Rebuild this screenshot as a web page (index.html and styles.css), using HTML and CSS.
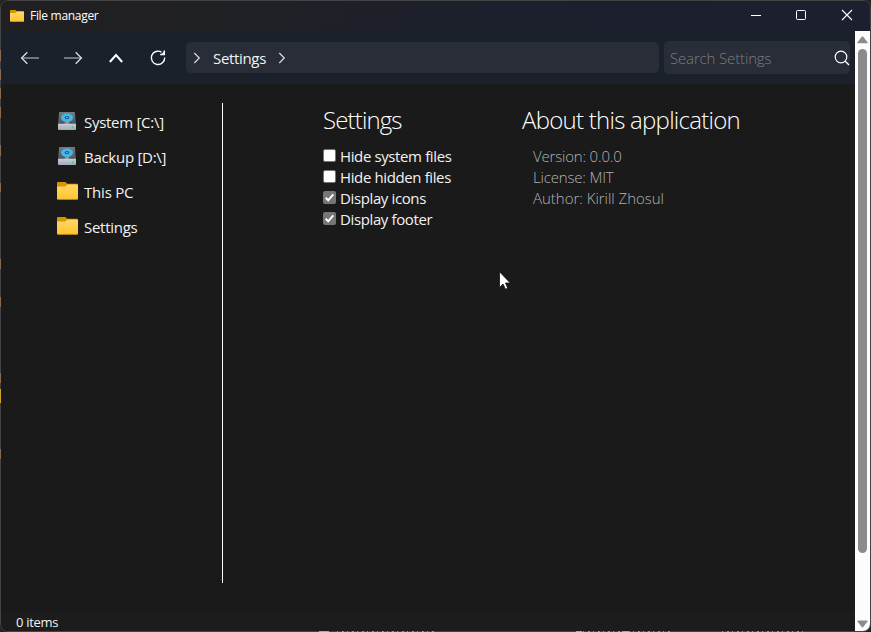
FILE: index.html
```
<!DOCTYPE html>
<html lang="en">
<head>
<meta charset="utf-8">
<title>File manager</title>
<link rel="stylesheet" href="styles.css">
</head>
<body>
<svg class="defs" width="0" height="0">
  <defs>
    <linearGradient id="gold" x1="0" y1="0" x2="0" y2="1"><stop offset="0" stop-color="#ffd667"/><stop offset="1" stop-color="#ffc52e"/></linearGradient>
    <linearGradient id="metal" x1="0" y1="0" x2="0" y2="1"><stop offset="0" stop-color="#767c82"/><stop offset="1" stop-color="#4d5359"/></linearGradient>
    <linearGradient id="tray" x1="0" y1="0" x2="0" y2="1"><stop offset="0" stop-color="#c9ccd3"/><stop offset="1" stop-color="#a2a9b7"/></linearGradient>
    <symbol id="folder" viewBox="0 0 21 18">
      <path d="M0 1.2Q0 0 1.2 0H8.4L10.2 1.7H19.8Q21 1.7 21 2.9V16H0Z" fill="#d89500"/>
      <path d="M0 4.4H8.4L10.2 2.4H20Q21 2.4 21 3.4V16.6Q21 17.6 20 17.6H1Q0 17.6 0 16.6Z" fill="url(#gold)"/>
      <path d="M.5 17.4H20.5" stroke="#c88c15" stroke-width=".8"/>
    </symbol>
    <symbol id="drive" viewBox="0 0 18 18">
      <path d="M1.2 0H16.8L18 12H0Z" fill="url(#metal)"/>
      <path d="M8 8H10L11.5 12H6.5Z" fill="#8c9299"/>
      <ellipse cx="9" cy="5.8" rx="6" ry="4.2" fill="#41b8ee"/>
      <ellipse cx="9" cy="5.6" rx="2.4" ry="1.6" fill="#235875"/>
      <ellipse cx="9" cy="5.6" rx="1" ry=".7" fill="#79cdf3"/>
      <path d="M0 11.8H18V17Q18 18 17 18H1Q0 18 0 17Z" fill="url(#tray)"/>
      <circle cx="14.7" cy="15.4" r="1.1" fill="#35dc68"/>
    </symbol>
  </defs>
</svg>
<div class="window">
  <header class="titlebar">
    <svg class="app-icon" width="14" height="12" viewBox="0 0 21 18" preserveAspectRatio="none"><use href="#folder"/></svg>
    <span class="app-title">File manager</span>
    <div class="controls">
      <svg width="46" height="30" viewBox="0 0 46 30"><path d="M19 14.5H29" stroke="#fff" fill="none"/></svg>
      <svg width="46" height="30" viewBox="0 0 46 30"><rect x="18.5" y="9.5" width="9" height="9" rx="1" stroke="#fff" fill="none"/></svg>
      <svg width="46" height="30" viewBox="0 0 46 30"><path d="M18 9L28 19M28 9L18 19" stroke="#fff" stroke-width="1.1" fill="none"/></svg>
    </div>
  </header>
  <div class="view">
    <div class="page">
      <nav class="toolbar">
        <svg class="tool" width="20" height="16" viewBox="0 0 20 16"><path d="M1.5 8H19" stroke="#8f9298" stroke-width="1.6"/><path d="M7.3 2.3L1.6 8L7.3 13.7" stroke="#ddd" stroke-width="1.3" fill="none"/></svg>
        <svg class="tool" width="20" height="16" viewBox="0 0 20 16"><path d="M1 8H18.5" stroke="#8f9298" stroke-width="1.6"/><path d="M12.7 2.3L18.4 8L12.7 13.7" stroke="#ddd" stroke-width="1.3" fill="none"/></svg>
        <svg class="tool" width="20" height="16" viewBox="0 0 20 16"><path d="M3.8 12L10 5L16.2 12" stroke="#fff" stroke-width="2" fill="none"/></svg>
        <svg class="tool" width="20" height="18" viewBox="0 0 20 18"><path d="M13.5 3.1A6.7 6.7 0 1 0 16.7 8.5" stroke="#fff" stroke-width="1.4" fill="none"/><path d="M16.3 1.4V5.4H12.2" stroke="#fff" stroke-width="1.5" fill="none"/><path d="M16.7 1.8V5.9H12.8Z" fill="#fff"/></svg>
        <div class="address">
          <svg width="8" height="12" viewBox="0 0 8 12"><path d="M1.3 1L6.3 6L1.3 11" stroke="#ddd" stroke-width="1.2" fill="none"/></svg>
          <span class="crumb">Settings</span>
          <svg width="8" height="12" viewBox="0 0 8 12"><path d="M1.3 1L6.3 6L1.3 11" stroke="#ddd" stroke-width="1.2" fill="none"/></svg>
        </div>
        <div class="search">
          <span class="placeholder">Search Settings</span>
          <svg width="16" height="16" viewBox="0 0 16 16"><circle cx="7" cy="7" r="5.8" stroke="#fff" stroke-width="1.2" fill="none"/><path d="M11.2 11.2L15 15" stroke="#fff" stroke-width="1.4"/></svg>
        </div>
      </nav>
      <main class="content">
        <aside class="sidebar">
          <div class="place"><svg class="drive" width="18" height="18"><use href="#drive"/></svg><span class="volume">System [C:\]</span></div>
          <div class="place"><svg class="drive" width="18" height="18"><use href="#drive"/></svg><span class="volume">Backup [D:\]</span></div>
          <div class="place"><svg width="21" height="18"><use href="#folder"/></svg><span>This PC</span></div>
          <div class="place"><svg width="21" height="18"><use href="#folder"/></svg><span class="volume">Settings</span></div>
        </aside>
        <section class="settings">
          <h2>Settings</h2>
          <div class="option"><i class="check"></i><span>Hide system files</span></div>
          <div class="option"><i class="check"></i><span>Hide hidden files</span></div>
          <div class="option"><i class="check on"><svg width="13" height="13" viewBox="0 0 13 13"><path d="M2.7 6.8L5.2 9.3L10.3 3.3" stroke="#fff" stroke-width="2" fill="none"/></svg></i><span>Display icons</span></div>
          <div class="option"><i class="check on"><svg width="13" height="13" viewBox="0 0 13 13"><path d="M2.7 6.8L5.2 9.3L10.3 3.3" stroke="#fff" stroke-width="2" fill="none"/></svg></i><span>Display footer</span></div>
        </section>
        <section class="about">
          <h2>About this application</h2>
          <p class="fact">Version: 0.0.0</p>
          <p class="fact">License: MIT</p>
          <p>Author: Kirill Zhosul</p>
        </section>
      </main>
      <footer class="status">0 items</footer>
    </div>
    <div class="scrollbar">
      <svg width="11" height="8" viewBox="0 0 11 8"><path d="M1 7.3Q0 7.3 .5 6.3L4.7 .8Q5.5 0 6.3 .8L10.5 6.3Q11 7.3 10 7.3Z" fill="#8b8b8b"/></svg>
      <div class="track"><div class="thumb"></div></div>
      <svg width="11" height="8" viewBox="0 0 11 8"><path d="M1 .5Q0 .5 .5 1.5L4.7 7Q5.5 7.8 6.3 7L10.5 1.5Q11 .5 10 .5Z" fill="#8b8b8b"/></svg>
    </div>
  </div>
</div>
<svg class="edge" width="871" height="632" viewBox="0 0 871 632" fill="none">
  <path d="M.5 50V61M.5 69V80M.5 88V99M.5 107V118M.5 145V156M.5 183V192M.5 259V269M.5 297V307M.5 373V383M.5 449V459" stroke="#8a6a50"/>
  <path d="M.5 389V403" stroke="#c9a427"/>
  <path d="M319 631.5H329M576 631.5H582M622 631.5H628" stroke="#aaa"/>
  <path d="M337 631.5H434M583 631.5H673M722 631.5H804" stroke="#999" stroke-dasharray="1 4 2 3"/>
</svg>
<svg class="pointer" width="12" height="19" viewBox="0 0 12 19"><path d="M.5 .8V16.4L4 13L6.4 18.2L8.8 17.2L6.5 12H11.3Z" fill="#fff" stroke="#111" stroke-width=".8"/></svg>
</body>
</html>
```
FILE: styles.css
```
* { box-sizing: border-box; }
body {
  margin: 0;
  width: 871px;
  height: 632px;
  overflow: hidden;
  background: #242424;
  color: #f2f2f2;
  font-family: "Open Sans", "Noto Sans", sans-serif;
  font-weight: 400;
  font-size: 15px;
}
svg { display: block; flex: none; }
.defs { position: absolute; }
.window {
  width: 871px;
  height: 632px;
  display: flex;
  flex-direction: column;
  border: 1px solid #434345;
  border-radius: 8px;
  overflow: hidden;
  background: #1a1a1a;
}
.titlebar {
  height: 30px;
  flex: none;
  display: flex;
  align-items: center;
  padding-left: 9px;
  background: linear-gradient(90deg, #202022 0, #202124 190px, #1c202c 480px, #1b1f2f 100%);
}
.app-title {
  margin-left: 6px;
  color: #fff;
  font: 400 12px/16px "Open Sans", sans-serif;
  letter-spacing: -0.3px;
  white-space: nowrap;
}
.controls { display: flex; margin-left: auto; }
.view { flex: 1; display: flex; min-height: 0; }
.page { flex: 1; display: flex; flex-direction: column; min-width: 0; }
.toolbar {
  height: 53px;
  flex: none;
  display: flex;
  align-items: center;
  padding: 0 4px 0 19px;
  background: #1b212b;
}
.tool { margin-right: 23px; }
.tool:nth-child(3) { margin-right: 22px; }
.tool:nth-child(4) { margin-right: 18px; }
.address {
  width: 473px;
  height: 31px;
  display: flex;
  align-items: center;
  padding-left: 7px;
  border-radius: 5px;
  background: #282d38;
}
.crumb { margin: 0 12px; width: 53px; white-space: nowrap; letter-spacing: -0.33px; }
.search {
  width: 186px;
  height: 33px;
  margin-left: 5px;
  display: flex;
  align-items: center;
  justify-content: space-between;
  padding: 0 0 0 6px;
  border-radius: 5px;
  background: #282d38;
}
.placeholder { color: #7c7d80; font-weight: 300; letter-spacing: -0.15px; white-space: nowrap; }
.content { flex: 1; display: flex; padding-top: 19px; }
.sidebar {
  width: 222px;
  height: 480px;
  padding: 2px 0 0 55px;
  border-right: 1px solid #fff;
}
.place {
  height: 35px;
  display: flex;
  align-items: center;
  padding-bottom: 1px;
  letter-spacing: -0.2px;
  white-space: nowrap;
}
.volume { letter-spacing: -0.28px; }
.place svg { margin: -3px 6px 0 1px; }
.place .drive { margin-left: 2px; margin-right: 8px; }
.settings { width: 199px; margin-left: 100px; }
h2 { margin: -1px 0 0; height: 43px; color: #fff; font-size: 24px; line-height: 36px; font-weight: 300; letter-spacing: -0.86px; white-space: nowrap; }
.option { height: 21px; display: flex; align-items: center; white-space: nowrap; letter-spacing: -0.38px; }
.check { width: 13px; height: 13px; margin: 0 4px 0 0; background: #fff; border: 1px solid #767676; border-radius: 2px; }
.check.on { background: #767676; border: 0; }
.about h2 { height: 44px; letter-spacing: -0.74px; }
.about p { margin: 0 0 0 11px; line-height: 21px; font-weight: 300; color: #b3b3b3; letter-spacing: -0.02px; white-space: nowrap; }
.about .fact { letter-spacing: -0.18px; }
.status { height: 19px; flex: none; padding-left: 15px; background: #1c1c1c; font-size: 13px; line-height: 20px; letter-spacing: -0.3px; }
.scrollbar {
  width: 15px;
  flex: none;
  display: flex;
  flex-direction: column;
  align-items: center;
  padding: 5px 0 3px;
  background: #fcfcfc;
}
.track { flex: 1; width: 9px; padding-top: 5px; }
.thumb { height: 504px; border-radius: 5px; background: #8b8b8b; }
.edge { position: absolute; left: 0; top: 0; }
.pointer { position: absolute; left: 499px; top: 271px; }
```
